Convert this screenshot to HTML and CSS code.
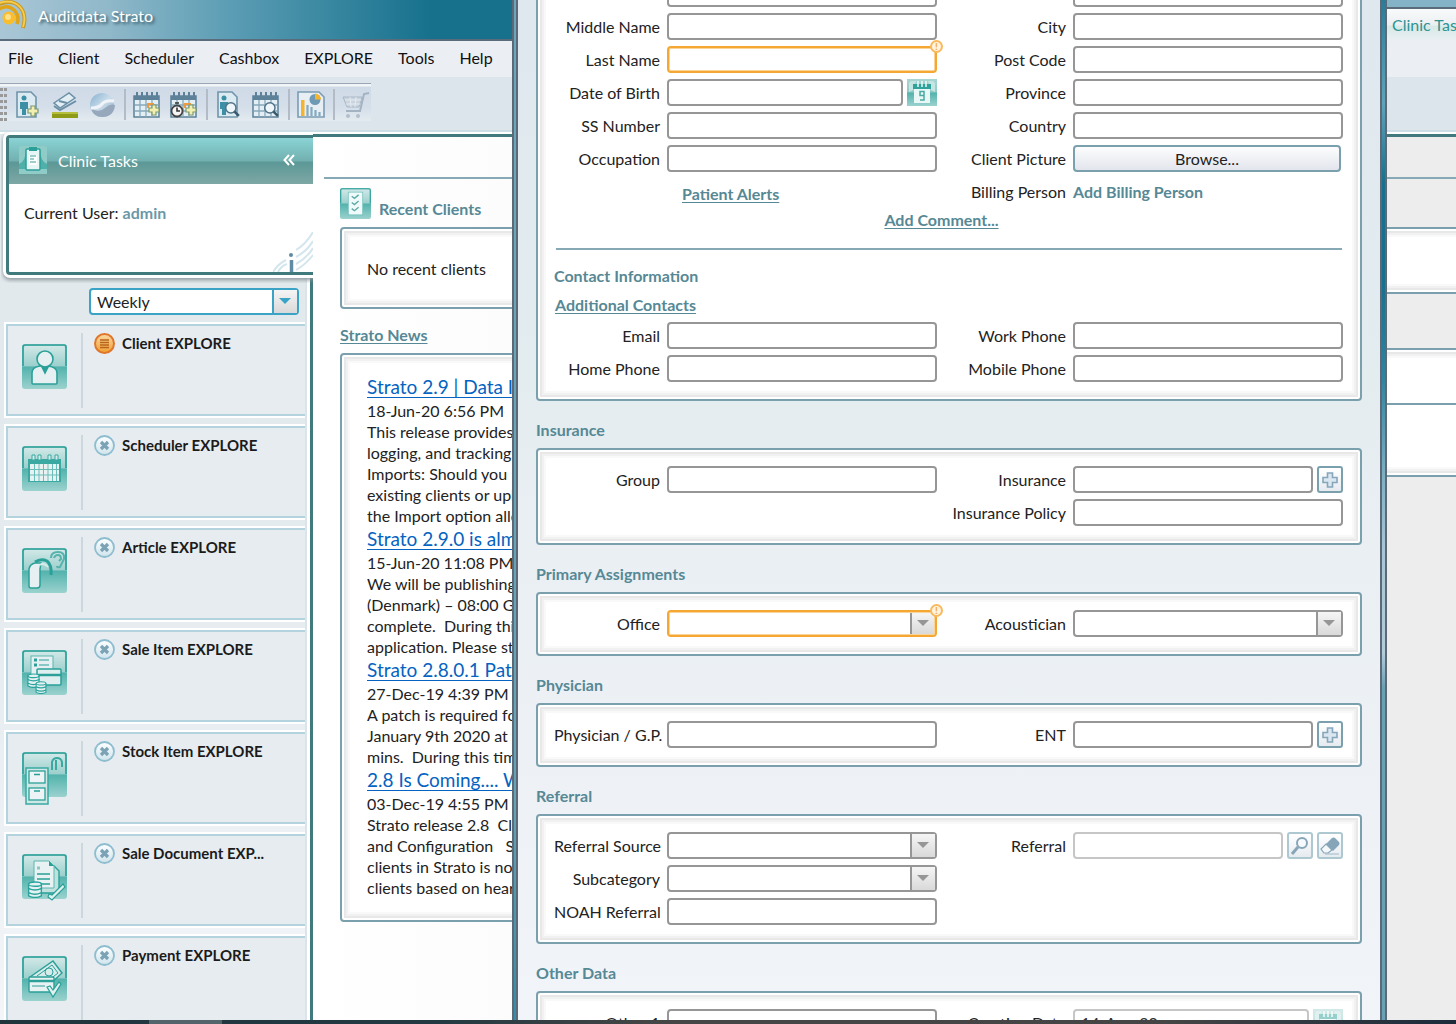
FILE: index.html
```html
<!DOCTYPE html>
<html lang="en">
<head>
<meta charset="utf-8">
<meta name="viewport" content="width=device-width, initial-scale=1">
<title>Auditdata Strato</title>
<link rel="stylesheet" href="styles.css">
</head>
<body>
<svg class="defs" width="0" height="0" aria-hidden="true">
  <defs>
    <linearGradient id="tile" x1="0" y1="0" x2="0" y2="1">
      <stop offset="0" stop-color="#a9d6d3"/><stop offset=".48" stop-color="#8fcac7"/>
      <stop offset=".52" stop-color="#54b3ad"/><stop offset="1" stop-color="#9bd2ce"/>
    </linearGradient>
    <linearGradient id="shine" x1="0" y1="0" x2="0" y2="1">
      <stop offset="0" stop-color="#d5eae9" stop-opacity=".9"/><stop offset="1" stop-color="#b9dddb" stop-opacity=".3"/>
    </linearGradient>
    <linearGradient id="orange" x1="0" y1="0" x2="0" y2="1">
      <stop offset="0" stop-color="#fbd9a4"/><stop offset="1" stop-color="#f0a030"/>
    </linearGradient>
    <linearGradient id="pale" x1="0" y1="0" x2="0" y2="1">
      <stop offset="0" stop-color="#fff"/><stop offset="1" stop-color="#cfe4ec"/>
    </linearGradient>
    <linearGradient id="globe" x1="0" y1="0" x2="1" y2="1">
      <stop offset="0" stop-color="#86b0cf"/><stop offset=".5" stop-color="#c9dcea"/><stop offset="1" stop-color="#8fa6bd"/>
    </linearGradient>
    <symbol id="tile-bg" viewBox="0 0 45 45">
      <rect x="0" y="0" width="45" height="45" rx="3" fill="url(#tile)"/>
      <path d="M2 22V4q0-2 2-2h37q2 0 2 2v18z" fill="url(#shine)"/>
      <path d="M1 22V3q0-2 2-2h39q2 0 2 2v19" fill="none" stroke="#2a9f98" stroke-width="1.6"/>
    </symbol>
    <symbol id="off" viewBox="0 0 21 21">
      <circle cx="10.500" cy="10.500" r="9.500" fill="url(#pale)" stroke="#8dbdce" stroke-width="1.800"/>
      <path d="M7 7l7 7M14 7l-7 7" stroke="#7ba3b5" stroke-width="3.200"/>
    </symbol>
    <symbol id="calgrid" viewBox="0 0 28 28">
      <rect x="1" y="5" width="25" height="21" fill="#e4eff5" stroke="#5c8199" stroke-width="1.500"/>
      <rect x="1" y="5" width="25" height="4" fill="#5c8199"/>
      <path d="M2 14h23M2 20h23M7 9v17M13 9v17M19 9v17" stroke="#87a9bb" stroke-width="1.300"/>
      <path d="M4 1v5M9 1v5M14 1v5M19 1v5M24 1v5" stroke="#5c8199" stroke-width="2"/>
    </symbol>
    <symbol id="plus" viewBox="0 0 12 12">
      <path d="M4 1h4v3h3v4H8v3H4V8H1V4h3z" fill="#f2efb0" stroke="#7c9a72" stroke-width="1.200"/>
    </symbol>
    <symbol id="bigplus" viewBox="0 0 16 16">
      <path d="M5.500 1h5v4.500H15v5h-4.500V15h-5v-4.500H1v-5h4.500z" fill="#dbe7f0" stroke="#86a6bb" stroke-width="1.600"/>
    </symbol>
    <symbol id="lens" viewBox="0 0 14 14">
      <circle cx="6" cy="6" r="4.500" fill="#eef6fa" stroke="#4f7288" stroke-width="1.300"/>
      <path d="M9 9l4 4" stroke="#39596d" stroke-width="2.200"/>
    </symbol>
    <symbol id="coins" viewBox="0 0 14 16">
      <g fill="#e4f2f2" stroke="#2aa39d" stroke-width="1.300">
        <path d="M1 11v3q6 3 12 0v-3z"/><path d="M1 7v4q6 3 12 0V7z"/><path d="M1 3v4q6 3 12 0V3z"/><ellipse cx="7" cy="3" rx="6" ry="2"/>
      </g>
    </symbol>
    <symbol id="date" viewBox="0 0 30 27">
      <rect width="30" height="27" fill="url(#tile)"/>
      <path d="M2 13V4l2-2h5l-3 9zM28 13V4l-2-2h-5l3 9z" fill="#c5e5e2"/>
      <path d="M6 5h18v5H6z" fill="#2fa39b"/>
      <rect x="7" y="10" width="16" height="14" fill="#e9f8f7"/>
      <path d="M11 2v6M15 2v6M19 2v6" stroke="#eefaf9" stroke-width="1.500"/>
      <path d="M17 16.500h-4v-4h4V21h-4" fill="none" stroke="#47aaa4" stroke-width="1.500"/>
    </symbol>
  </defs>
</svg>

<div class="app">
  <header class="top">
    <div class="top-main">
      <div class="titlebar">
        <svg class="logo" width="28" height="32" viewBox="0 0 28 32" aria-hidden="true">
          <circle cx="9" cy="18" r="6.500" fill="#f9bd2e"/>
          <circle cx="8" cy="17" r="3" fill="#fde08a"/>
          <path d="M-1 9q9-5 15 1t3 14" fill="none" stroke="#e0a416" stroke-width="3.500"/>
          <path d="M-1 4q14-5 21 3t3 21" fill="none" stroke="#c99a2a" stroke-width="4"/>
          <path d="M-1 3q14-4 21 4t3 20" fill="none" stroke="#f8cf4a" stroke-width="1.800"/>
        </svg>
        <span class="app-name">Auditdata Strato</span>
      </div>
      <nav class="menu">
        <a href="#">File</a><a href="#">Client</a><a href="#">Scheduler</a><a href="#">Cashbox</a><a href="#">EXPLORE</a><a href="#">Tools</a><a href="#">Help</a>
      </nav>
    </div>
    <div class="top-side">
      <a class="tab" href="#">Clinic Tasks</a>
    </div>
  </header>

  <div class="toolbar-row">
    <div class="toolbar">
      <span class="grip"></span>
      <button aria-label="Add client"><svg width="28" height="28" viewBox="0 0 28 28"><path d="M3 1h14l5 5v20H3z" fill="#dcebf1" stroke="#7095ab" stroke-width="1.600"/><circle cx="10" cy="7" r="2.500" fill="#3d8fa5"/><path d="M6 11h8v7h-2v6H8v-6H6z" fill="#3d8fa5"/><use href="#plus" x="13" y="14" width="12" height="12"/></svg></button>
      <button aria-label="Scan"><svg width="28" height="28" viewBox="0 0 28 28"><path d="M3 12L18 2l6 5-15 10z" fill="#e2eef4" stroke="#6b90a6" stroke-width="1.500"/><path d="M3 15l6 4 16-9M8 10l8 2" fill="none" stroke="#6b90a6" stroke-width="2"/><rect x="1" y="21" width="26" height="6" fill="#8f9a16"/><path d="M1 22h26" stroke="#c3ca4c" stroke-width="1.500"/></svg></button>
      <button aria-label="Synchronise"><svg width="28" height="28" viewBox="0 0 28 28"><circle cx="14" cy="14" r="12" fill="url(#globe)"/><path d="M3 18q9 4 14-1t10-3q-1 12-13 12Q6 26 3 18z" fill="#97a7bc"/><path d="M26 10q-9-1-12 3t-11 4" fill="none" stroke="#f0f4f8" stroke-width="3"/></svg></button>
      <span class="sep"></span>
      <button aria-label="New appointment"><svg width="28" height="28" viewBox="0 0 28 28"><use href="#calgrid" width="28" height="28"/><path d="M15 17v-4h6" fill="none" stroke="#f09a3e" stroke-width="2"/><use href="#plus" x="15" y="13" width="12" height="12"/></svg></button>
      <button aria-label="Quick appointment"><svg width="28" height="28" viewBox="0 0 28 28"><use href="#calgrid" width="28" height="28"/><path d="M15 17v-4h6" fill="none" stroke="#f09a3e" stroke-width="2"/><use href="#plus" x="15" y="13" width="12" height="12"/><circle cx="7" cy="20" r="5.500" fill="#f5f5f5" stroke="#444" stroke-width="1.800"/><path d="M7 16.500V20h3M5 12h4" fill="none" stroke="#333" stroke-width="1.600"/></svg></button>
      <span class="sep"></span>
      <button aria-label="Find client"><svg width="28" height="28" viewBox="0 0 28 28"><path d="M3 1h14l5 5v20H3z" fill="#dcebf1" stroke="#7095ab" stroke-width="1.600"/><circle cx="9" cy="7" r="2.500" fill="#3d8fa5"/><path d="M5 11h8v7h-2v6H7v-6H5z" fill="#3d8fa5"/><use href="#lens" x="9" y="10" width="16" height="16"/></svg></button>
      <button aria-label="Find appointment"><svg width="28" height="28" viewBox="0 0 28 28"><use href="#calgrid" width="28" height="28"/><use href="#lens" x="11" y="10" width="16" height="16"/></svg></button>
      <span class="sep"></span>
      <button aria-label="Reports"><svg width="28" height="28" viewBox="0 0 28 28"><path d="M1 1h21l5 5v20H1z" fill="#e7eff4" stroke="#7a9cb3" stroke-width="1.600"/><rect x="4" y="9" width="3.500" height="16" fill="#f4b42e"/><path d="M10.500 14v11M14.500 16v9M18.500 19v6M22.500 21v4" stroke="#85a9c0" stroke-width="2.200"/><circle cx="18" cy="8.500" r="5.500" fill="#6f9ab5"/><path d="M18 8.500V2.500a6 6 0 0 1 6 6z" fill="#f4b42e"/></svg></button>
      <span class="sep"></span>
      <button aria-label="Cart" disabled><svg width="28" height="28" viewBox="0 0 28 28"><path d="M27 2l-5 1-4 17H4" fill="none" stroke="#a3b3c2" stroke-width="2"/><path d="M1 6h19l-3 10H5z" fill="#c9d4de" stroke="#a9b8c6"/><path d="M3 9h16M4 13h14M8 6l1 10M14 6l-1 10" stroke="#e6ecf1"/><circle cx="6" cy="25" r="2" fill="#b3bfca"/><circle cx="16" cy="25" r="2" fill="#b3bfca"/></svg></button>
    </div>
  </div>

  <div class="body">
    <aside class="sidebar">
      <section class="tasks">
        <h2 class="tasks-head">
          <svg width="28" height="28" viewBox="0 0 28 28" aria-hidden="true"><rect width="28" height="28" rx="2" fill="#8fcbc7"/><path d="M0 28V18q7-3 7-15h14q0 12 7 15v10z" fill="#4fb0aa"/><rect x="0" y="23" width="28" height="5" fill="#8fcbc7"/><rect x="7" y="3" width="14" height="21" rx="1" fill="#e6f6f5" stroke="#2c9f98" stroke-width="1.500"/><rect x="10" y="1" width="8" height="4" fill="#2c9f98"/><path d="M10 9h8v10h-8z" fill="#fff"/><path d="M11 10h6M11 13h4M11 16h6" stroke="#7cc0bc" stroke-width="1.400"/></svg>
          <span>Clinic Tasks</span>
          <button class="collapse" aria-label="Collapse"><svg width="12" height="12" viewBox="0 0 12 12"><path d="M6 1L1.500 6 6 11M11 1L6.500 6l4.500 5" fill="none" stroke="#fff" stroke-width="2"/></svg></button>
        </h2>
        <p class="user">Current User: <b>admin</b></p>
        <svg class="mark" width="40" height="40" viewBox="0 0 40 40" aria-hidden="true"><g fill="none" stroke="#d3e6ee" stroke-width="2"><path d="M0 40q5-8 13-12M5 40q3-6 9-8M23 18q10-6 17-18M23 25q11-6 17-16M23 32q11-6 17-16M23 38q9-5 17-15"/></g><path d="M18.500 28v12" stroke="#5e8ca4" stroke-width="3.500"/><circle cx="18" cy="23" r="2" fill="#5e8ca4"/></svg>
      </section>
      <div class="list">
        <span class="combo period">
          <select aria-label="Period"><option>Weekly</option></select>
        </span>
        <article class="card">
          <svg width="45" height="54" viewBox="0 0 45 54"><use href="#tile-bg" width="45" height="45"/><g fill="#e6f0f2" stroke="#2aa098" stroke-width="1.600"><path d="M10 39V29q0-6 8-7h8q9 1 9 7v10q0 1-1 1H11q-1 0-1-1z"/><path d="M20 23l3 6 3-6z" fill="#2aa098"/><circle cx="23" cy="15" r="8"/></g></svg>
          <div class="card-body"><svg width="21" height="21" viewBox="0 0 21 21"><circle cx="10.500" cy="10.500" r="9.500" fill="url(#orange)" stroke="#e0762c" stroke-width="2"/><path d="M6 7h9M6 9.500h9M6 12h9M6 14.500h9" stroke="#b9641a" stroke-width="1.300"/></svg><h3>Client EXPLORE</h3></div>
        </article>
        <article class="card">
          <svg width="45" height="54" viewBox="0 0 45 54"><use href="#tile-bg" width="45" height="45"/><rect x="6" y="13" width="33" height="23" fill="#3aa9a2"/><rect x="8" y="18" width="29" height="17" fill="#e9f2f3"/><path d="M12.500 18v17M17 18v17M21.500 18v17M26 18v17M30.500 18v17M34.500 18v17M8 23.500h29M8 29h29" stroke="#6bbdb8"/><path d="M10 9h3v5h-3zM16 9h3v5h-3zM26 9h3v5h-3zM33 9h3v5h-3z" fill="#d9eceb" stroke="#3aa9a2"/></svg>
          <div class="card-body"><svg width="21" height="21"><use href="#off" width="21" height="21"/></svg><h3>Scheduler EXPLORE</h3></div>
        </article>
        <article class="card">
          <svg width="45" height="54" viewBox="0 0 45 54"><use href="#tile-bg" width="45" height="45"/><path d="M7 38V21q1-5 6-6h6l-1 6v16q0 3-3 3h-6q-2 0-2-2z" fill="#e6f0f2" stroke="#2aa098" stroke-width="1.500"/><path d="M13 14q6-4 12-1 5 4 4 14" fill="none" stroke="#2aa098" stroke-width="3"/><path d="M18 17q4-3 8 2" fill="none" stroke="#d6eceb" stroke-width="2"/><path d="M29 10q0-6 7-6t6 7q-2 4-4 8-3 1-3-1M32 10q1-3 4-3t3 4l-2 2" fill="none" stroke="#57b2ad" stroke-width="2"/></svg>
          <div class="card-body"><svg width="21" height="21"><use href="#off" width="21" height="21"/></svg><h3>Article EXPLORE</h3></div>
        </article>
        <article class="card">
          <svg width="45" height="54" viewBox="0 0 45 54"><use href="#tile-bg" width="45" height="45"/><rect x="9" y="6" width="22" height="20" fill="#e6f0f2" stroke="#5cb5b0"/><path d="M12 10h3M12 15h3" stroke="#2aa098" stroke-width="3"/><path d="M17 10h10M17 15h10" stroke="#8ac6c3" stroke-width="2"/><rect x="15" y="19" width="24" height="16" rx="1" fill="#dfeeee" stroke="#2aa098" stroke-width="1.500"/><path d="M15 25h24" stroke="#2aa098" stroke-width="2.500"/><use href="#coins" x="5" y="23" width="13" height="15"/><use href="#coins" x="12" y="31" width="14" height="13"/></svg>
          <div class="card-body"><svg width="21" height="21"><use href="#off" width="21" height="21"/></svg><h3>Sale Item EXPLORE</h3></div>
        </article>
        <article class="card">
          <svg width="45" height="54" viewBox="0 0 45 54"><use href="#tile-bg" width="45" height="45"/><rect x="4" y="16" width="22" height="36" fill="#cfe8e6" stroke="#3aa9a2" stroke-width="1.500"/><rect x="7" y="19" width="16" height="12" fill="#eef4f5" stroke="#2aa098" stroke-width="1.300"/><rect x="7" y="36" width="16" height="12" fill="#eef4f5" stroke="#2aa098" stroke-width="1.300"/><path d="M12 22.500h6M12 39h6" stroke="#2aa098" stroke-width="1.500"/><path d="M30 18V10q1-4 5-4t5 4v5M34 18V8" fill="none" stroke="#3aa9a2" stroke-width="2"/></svg>
          <div class="card-body"><svg width="21" height="21"><use href="#off" width="21" height="21"/></svg><h3>Stock Item EXPLORE</h3></div>
        </article>
        <article class="card">
          <svg width="45" height="54" viewBox="0 0 45 54"><use href="#tile-bg" width="45" height="45"/><path d="M22 12h10l5 5v22H18z" fill="#bfe2df" stroke="#2aa098" stroke-width="1.400"/><path d="M12 7h15l5 5v22H12z" fill="#e9f2f3" stroke="#5cb5b0"/><path d="M27 7v5h5z" fill="#2aa098"/><path d="M15 14h3" stroke="#8ac6c3" stroke-width="3"/><path d="M15 20h13M15 25h13M17 30h11" stroke="#2aa098" stroke-width="1.300"/><use href="#coins" x="5" y="27" width="16" height="17"/><path d="M26 43l4 3 13-13-2-3-11 11-3-1z" fill="#dff0ef" stroke="#2aa098" stroke-width="1.200"/></svg>
          <div class="card-body"><svg width="21" height="21"><use href="#off" width="21" height="21"/></svg><h3>Sale Document EXP...</h3></div>
        </article>
        <article class="card">
          <svg width="45" height="54" viewBox="0 0 45 54"><use href="#tile-bg" width="45" height="45"/><path d="M8 21L31 5l9 12-13 12z" fill="#d8ebeb" stroke="#2aa098" stroke-width="1.400"/><path d="M15 20l15-11 6 8-9 7" fill="none" stroke="#2aa098"/><circle cx="27" cy="16" r="4" fill="none" stroke="#2aa098"/><rect x="7" y="21" width="25" height="15" rx="1" fill="#e9f2f3" stroke="#2aa098" stroke-width="1.400"/><path d="M7 25h25" stroke="#2aa098" stroke-width="2.500"/><path d="M10 30h13" stroke="#2aa098"/><path d="M25 31l3-1 3 4 6-8 2 2-8 13z" fill="#dff0ef" stroke="#2aa098" stroke-width="1.200"/></svg>
          <div class="card-body"><svg width="21" height="21"><use href="#off" width="21" height="21"/></svg><h3>Payment EXPLORE</h3></div>
        </article>
      </div>
    </aside>

    <main class="main">
      <hr class="rule">
      <div class="columns">
        <div class="col">
          <h2 class="recent">
            <svg width="31" height="31" viewBox="0 0 45 45" aria-hidden="true"><use href="#tile-bg" width="45" height="45"/><rect x="12" y="6" width="21" height="33" fill="#f1fafa" stroke="#6abdb8"/><path d="M17 12l4 3 6-5M17 21l4 3 6-5M17 30l4 3 6-5" fill="none" stroke="#5ba9a5" stroke-width="2"/></svg>
            <span>Recent Clients</span>
          </h2>
          <div class="panel recent-panel">No recent clients</div>
          <h2 class="news-title"><a href="#">Strato News</a></h2>
          <div class="panel news">
            <a href="#">Strato 2.9 | Data Import</a>
            <p>18-Jun-20 6:56 PM
This release provides new
logging, and tracking of
Imports: Should you need
existing clients or upload
the Import option allows</p>
            <a href="#">Strato 2.9.0 is almost here</a>
            <p>15-Jun-20 11:08 PM
We will be publishing on
(Denmark) – 08:00 GMT
complete.  During this time
application. Please stop</p>
            <a href="#">Strato 2.8.0.1 Patch</a>
            <p>27-Dec-19 4:39 PM
A patch is required for
January 9th 2020 at 10
mins.  During this time</p>
            <a href="#">2.8 Is Coming.... Watch</a>
            <p>03-Dec-19 4:55 PM
Strato release 2.8  Client
and Configuration   Some
clients in Strato is now
clients based on hearing</p>
          </div>
        </div>
        <div class="col-side">
          <div class="panel side-a"></div>
          <div class="panel side-b"></div>
        </div>
      </div>
    </main>
  </div>

  <form class="dialog">
    <div class="panel section">
      <div class="grid">
        <span></span><input aria-label="First name"><span></span><input aria-label="Address">
        <label for="mid">Middle Name</label><input id="mid">
        <label for="city">City</label><input id="city">
        <label for="last">Last Name</label><span class="field invalid"><input id="last"><i class="alert">!</i></span>
        <label for="post">Post Code</label><input id="post">
        <label for="dob">Date of Birth</label><span class="field"><input id="dob"><button type="button" class="cal" aria-label="Pick date"><svg width="30" height="27"><use href="#date" width="30" height="27"/></svg></button></span>
        <label for="prov">Province</label><input id="prov">
        <label for="ss">SS Number</label><input id="ss">
        <label for="country">Country</label><input id="country">
        <label for="occ">Occupation</label><input id="occ">
        <label for="pic">Client Picture</label><button type="button" id="pic" class="browse">Browse...</button>
        <a class="link alerts" href="#">Patient Alerts</a>
        <span class="caption">Billing Person</span><a class="link plain" href="#">Add Billing Person</a>
      </div>
      <p class="comment"><a class="link" href="#">Add Comment...</a></p>
      <hr>
      <h3 class="sub">Contact Information</h3>
      <p class="extra"><a class="link" href="#">Additional Contacts</a></p>
      <div class="grid">
        <label for="email">Email</label><input id="email">
        <label for="work">Work Phone</label><input id="work">
        <label for="home">Home Phone</label><input id="home">
        <label for="mobile">Mobile Phone</label><input id="mobile">
      </div>
    </div>

    <h3 class="head">Insurance</h3>
    <div class="panel section">
      <div class="grid">
        <label for="group">Group</label><input id="group">
        <label for="ins">Insurance</label><span class="field"><input id="ins"><button type="button" class="mini" aria-label="Add insurance"><svg width="16" height="16"><use href="#bigplus" width="16" height="16"/></svg></button></span>
        <label class="third" for="policy">Insurance Policy</label><input id="policy">
      </div>
    </div>

    <h3 class="head">Primary Assignments</h3>
    <div class="panel section">
      <div class="grid">
        <label for="office">Office</label><span class="field combo invalid"><select id="office"><option></option></select><i class="alert">!</i></span>
        <label for="acou">Acoustician</label><span class="field combo"><select id="acou"><option></option></select></span>
      </div>
    </div>

    <h3 class="head">Physician</h3>
    <div class="panel section">
      <div class="grid">
        <label for="gp">Physician / G.P.</label><input id="gp">
        <label for="ent">ENT</label><span class="field"><input id="ent"><button type="button" class="mini" aria-label="Add ENT"><svg width="16" height="16"><use href="#bigplus" width="16" height="16"/></svg></button></span>
      </div>
    </div>

    <h3 class="head">Referral</h3>
    <div class="panel section">
      <div class="grid">
        <label for="src">Referral Source</label><span class="field combo"><select id="src"><option></option></select></span>
        <label for="ref">Referral</label><span class="field"><input id="ref" disabled><button type="button" class="mini" disabled aria-label="Search"><svg width="20" height="20" viewBox="0 0 20 20"><circle cx="12" cy="7" r="5" fill="#f6fafc" stroke="#86a5b9" stroke-width="2"/><path d="M8 11l-6 7" stroke="#86a5b9" stroke-width="3"/></svg></button><button type="button" class="mini" disabled aria-label="Clear"><svg width="20" height="20" viewBox="0 0 20 20"><path d="M6 8l6-6q2-1 3 0l4 4q1 2 0 3l-6 6z" fill="#86a5b9"/><path d="M6 8l6 6-4 3H4l-3-4z" fill="#f4f8fa" stroke="#86a5b9" stroke-width="1.200"/><path d="M5 18h14" stroke="#9fb8c8"/></svg></button></span>
        <label for="subc">Subcategory</label><span class="field combo"><select id="subc"><option></option></select></span>
        <label class="first" for="noah">NOAH Referral</label><input id="noah">
      </div>
    </div>

    <h3 class="head">Other Data</h3>
    <div class="panel section">
      <div class="grid">
        <label for="o1">Other 1</label><input id="o1">
        <label for="created">Creation Date</label><span class="field"><input id="created" value="14-Aug-20" disabled><button type="button" class="cal" disabled aria-label="Pick date"><svg width="30" height="27"><use href="#date" width="30" height="27"/></svg></button></span>
      </div>
    </div>
  </form>

  <div class="taskbar"><span></span></div>
</div>
</body>
</html>
```

FILE: styles.css
```css
*, *::before, *::after { box-sizing: border-box; }
body {
  margin: 0;
  font: 16px/21px Lato, "Liberation Sans", sans-serif;
  color: #222;
}
h2, h3, p { margin: 0; font-size: 16px; line-height: 21px; }
a { color: inherit; text-decoration: none; }
svg { display: block; flex: none; }
input, select, button { font: inherit; color: inherit; margin: 0; }
button { padding: 0; border: 0; background: none; }
.defs { position: absolute; }

.app {
  position: relative;
  height: 100vh;
  overflow: hidden;
  display: flex;
  flex-direction: column;
}

/* title bar and menu */
.top { display: grid; grid-template-columns: 1fr 84px; background: #ebeff4; flex: none; }
.top-main { min-width: 0; }
.titlebar {
  display: flex;
  gap: 10px;
  height: 41px;
  border-bottom: 2px solid #5a6c7b;
  background: linear-gradient(90deg, #a9c6d6 0, #8fb8c9 110px, #5b9db4 230px, #17718d 430px);
}
.app-name { color: #fff; padding-top: 5px; text-shadow: 2px 2px 3px #33535f; }
.menu { display: flex; gap: 25px; padding: 6px 8px 9px; color: #111; }
.top-side { border-top: 7px solid #84b2c6; min-width: 0; }
.tab {
  display: block;
  height: 34px;
  padding: 5px 0 0 20px;
  border-top: 2px solid #5a6c7b;
  white-space: nowrap;
  color: #2d9492;
  background: linear-gradient(#f8fafb 0, #eceff2 16px, #d5e9e6 17px, #ebeff4 32px);
}

/* toolbar */
.toolbar-row { flex: none; padding: 6px 0 9px; background: #dde5ec; border-bottom: 2px solid #cddfe6; height: 55px; }
.toolbar {
  display: flex;
  align-items: center;
  gap: 9px;
  width: 371px;
  height: 38px;
  padding-top: 4px;
  border-top: 1px solid #9aa6b6;
  background: linear-gradient(#f2f5f8 0, #f2f5f8 2px, #cfdae7 3px, #d5dfea 24px, #e4ebf0 100%);
}
.grip {
  width: 7px;
  height: 33px;
  margin-right: -2px;
  background: repeating-linear-gradient(#999 0 3px, transparent 3px 6px);
  mask: repeating-linear-gradient(90deg, #000 0 3px, transparent 3px 4px);
}
.sep { width: 2px; height: 31px; background: #b3bcc6; margin: 0 -2px 0 -1px; }

/* body */
.body { flex: 1; min-height: 0; display: flex; padding-top: 2px; background: #fff; }
.sidebar { width: 313px; flex: none; display: flex; flex-direction: column; background: #e3eaee; }
.tasks {
  position: relative;
  z-index: 1;
  height: 140px;
  flex: none;
  margin: 1px 0 0 6px;
  border: 3px solid #417a7d;
  border-right: 0;
  border-radius: 4px 0 0 4px;
  background: #fff;
  box-shadow: 0 0 0 3px #fff, 0 2px 4px 3px #8a9498;
  clip-path: inset(-3px 0 -8px -5px);
}
.tasks-head {
  display: flex;
  align-items: center;
  gap: 11px;
  height: 46px;
  padding: 0 18px 2px 10px;
  color: #fff;
  font-weight: 400;
  background: linear-gradient(#8ad3d5 0, #72b0b0 23px, #5b9896 24px, #7ea7a5 100%);
}
.collapse { margin-left: auto; }
.user { padding: 18px 15px; }
.user b { color: #6b98a8; }
.mark { position: absolute; right: 0; bottom: 0; }
.list {
  flex: 1;
  padding: 13px 5px 0 4px;
  border-right: 3px solid #417a7d;
  background: linear-gradient(#e1e9ed, #e6ecf0 50%, #f4f6f9);
  box-shadow: inset -3px 0 #fff, inset -5px 0 #dae4ea;
}
.card {
  display: flex;
  height: 92px;
  margin: 0 0 10px 2px;
  padding: 7px 0 0 14px;
  border: 2px solid #b3d3de;
  border-right: 0;
  background: #e7ecf0;
  outline: 2px solid #fff;
  clip-path: inset(-2px 0 -2px -2px);
}
.card > svg { margin-top: 11px; }
.card-body { display: flex; gap: 7px; height: 75px; margin-left: 14px; padding-left: 11px; border-left: 2px solid #ccd7de; }
.card h3 { color: #1b1b1b; font-size: 15px; white-space: nowrap; }

/* combo boxes */
.combo { position: relative; display: block; }
.combo select {
  width: 100%;
  height: 27px;
  padding: 0 6px;
  appearance: none;
  border: 2px solid #969696;
  border-radius: 4px;
  background: #fff;
}
.combo::after {
  content: "";
  position: absolute;
  right: 2px;
  top: 2px;
  bottom: 2px;
  width: 25px;
  border-left: 2px solid #969696;
  background: linear-gradient(#f5f5f5, #d9d9d9);
  pointer-events: none;
}
.combo::before {
  content: "";
  position: absolute;
  z-index: 1;
  right: 8px;
  top: 10px;
  border: 6px solid transparent;
  border-top-color: #969696;
  border-bottom: 0;
  pointer-events: none;
}
.period { width: 210px; margin: 0 0 9px 85px; }
.period select, .period::after { border-color: #3ba3c6; }
.period::before { border-top-color: #3ba3c6; }

/* main area */
.main {
  flex: 1;
  min-width: 0;
  border-top: 3px solid #417a7d;
  padding-top: 40px;
  background: linear-gradient(90deg, #fff 0, #fcfcfc 190px, #ededed 1060px);
}
.rule { height: 2px; margin: 0 0 0 11px; border: 0; background: #86a9b5; }
.columns { display: grid; grid-template-columns: 1fr 84px; padding-left: 27px; }
.col { min-width: 0; }
.panel {
  border: 2px solid #7ba0ad;
  border-radius: 4px;
  background: #fff;
  box-shadow: inset 0 0 0 2px #fff, inset 0 0 0 4px #e8e8e8, inset 0 0 0 6px #f1f1f1, inset 0 0 0 8px #f9f9f9;
}
.recent { display: flex; gap: 8px; align-items: center; margin: 9px 0 8px; color: #568895; }
.recent span { padding-top: 10px; }
.recent-panel { height: 82px; padding: 29px 25px; }
.news-title { height: 44px; padding-top: 15px; color: #568895; }
.news-title a, .link { color: #568895; font-weight: 700; text-decoration: underline; text-underline-offset: 2px; }
.news { display: flex; flex-direction: column; padding: 19px 25px 22px; white-space: pre; overflow: hidden; }
.news a { font-size: 19px; line-height: 26px; color: #0563c1; text-decoration: underline; text-underline-offset: 3px; }
.col-side { padding-top: 48px; }
.col-side .panel { margin-right: -10px; }
.col-side .side-a { height: 67px; margin-bottom: 54px; }
.side-b { height: 129px; }
.side-b::before { content: ""; display: block; height: 55px; border-bottom: 2px solid #7ba0ad; }

/* client dialog */
.dialog {
  position: absolute;
  z-index: 2;
  top: -62px;
  bottom: 0;
  left: 512px;
  right: 69px;
  padding: 24px 23px 0 22px;
  overflow: hidden;
  border: solid #5b6a76;
  border-width: 0 2px;
  background:
    linear-gradient(#5b6a76, #5b6a76) 2px 0 / 2px 100% no-repeat,
    linear-gradient(#6da7bb, #68a0b4 80%, #358ba5) 0 0 / 2px 100% no-repeat,
    linear-gradient(#2a7c99 62px, #5fa3ba 165px, #17708d 245px, #17708d 345px, #2f84a0 440px, #7fb0c4 540px, #a7c6d5 612px, #b3cbdb 715px, #68a0b4 750px) 100% 0 / 3px 100% no-repeat,
    linear-gradient(90deg, #5b6a76, #5b6a76) right 3px top 0 / 2px 100% no-repeat,
    linear-gradient(#dfe7ef, #e3ecef 40%, #eaeff4 55%, #edf1f6 75%, #f1f5f9);
}
.section { padding: 16px 17px 17px 16px; }
.grid {
  display: grid;
  grid-template-columns: 106px 1fr 122px 1fr;
  grid-auto-rows: 27px;
  gap: 6px 7px;
  align-items: center;
}
.grid label, .caption { text-align: right; white-space: nowrap; }
.third { grid-column: 3; }
.first { grid-column: 1; }
.grid input {
  width: 100%;
  min-width: 0;
  height: 27px;
  padding: 0 6px;
  border: 2px solid #969696;
  border-radius: 4px;
  background: #fff;
}
.grid input:disabled { border-color: #c6c6c6; color: #333; }
.field { position: relative; display: flex; gap: 4px; }
.grid .invalid input, .grid .invalid select { border-color: #f5a733; box-shadow: inset 0 0 0 1px #fbd49a; }
.invalid.combo::after { right: 3px; top: 3px; bottom: 3px; width: 24px; }
.alert {
  position: absolute;
  z-index: 2;
  right: -6px;
  top: -6px;
  width: 13px;
  height: 13px;
  border: 2px solid #f9b95c;
  border-radius: 50%;
  background: #fff4e2;
  color: #f5a733;
  font: bold 10px/9px Lato, sans-serif;
  text-align: center;
}
.cal { flex: none; height: 27px; }
.cal:disabled { opacity: .5; }
.browse {
  height: 27px;
  margin-right: 2px;
  border: 2px solid #7ba0ad;
  border-radius: 4px;
  background: linear-gradient(#fdfdfe, #e2e5ec);
}
.mini {
  display: flex;
  align-items: center;
  justify-content: center;
  flex: none;
  width: 26px;
  height: 27px;
  border: 2px solid #7ba0ad;
  border-radius: 3px;
  background: linear-gradient(#fff, #e6ebf0);
}
.mini:disabled { border-color: #aec8d1; }
.alerts { grid-column: 2; padding: 4px 0 0 15px; }
.link.plain { text-decoration: none; }
.comment { margin: 4px 14px 18px 0; text-align: center; }
.section hr { height: 2px; margin: 0 1px 15px 2px; border: 0; background: #86a9b5; }
.sub, .head { color: #568895; }
.extra { margin: 8px 0 7px 1px; }
.head { margin: 18px 0 8px; }

/* desktop task bar edge */
.taskbar { position: absolute; z-index: 3; left: 0; right: 0; bottom: 0; height: 4px; padding-left: 149px; background: linear-gradient(90deg, #20343c 0, #233a42 30%, #454545 45%, #454545 80%, #1c2b3b); }
.taskbar span { display: block; width: 73px; height: 4px; background: #53646b; }
```
